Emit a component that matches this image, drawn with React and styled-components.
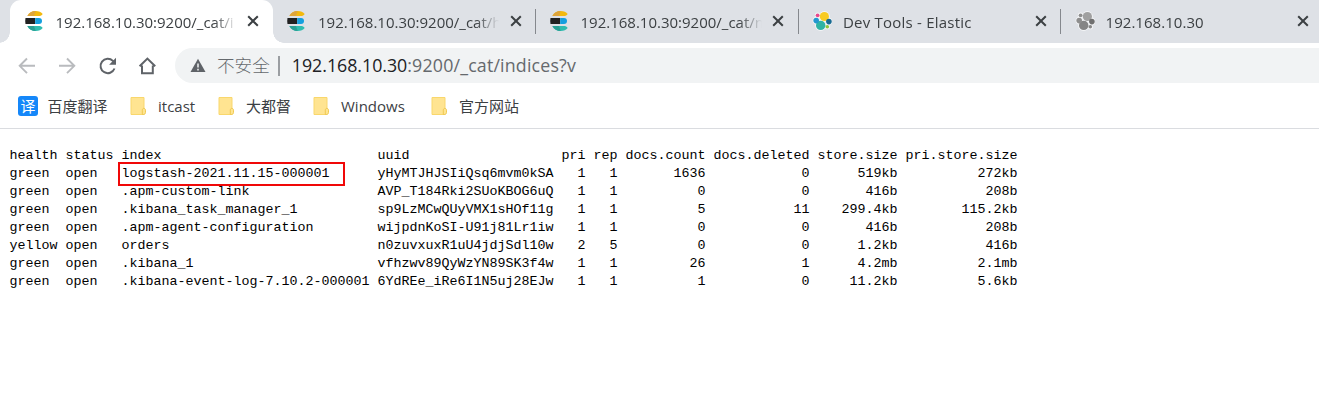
import React from 'react';
import styled, { createGlobalStyle } from 'styled-components';

const Global = createGlobalStyle`
  *, *::before, *::after { box-sizing: border-box; }
  body { margin: 0; background: #fff; overflow: hidden; }
  svg { display: block; flex: none; }
`;

const Browser = styled.div`
  width: 1319px;
  height: 402px;
  overflow: hidden;
  background: #fff;
  color: #3c4043;
  font-family: 'Open Sans', 'Noto Sans CJK SC', sans-serif;
`;

const TabStrip = styled.div`
  display: flex;
  height: 43px;
  padding-left: 10px;
  background: #dee1e6;
`;

const Tab = styled.div`
  position: relative;
  flex: none;
  display: flex;
  align-items: center;
  width: 262.5px;
  padding: 0 0 1px 14.5px;
  border-radius: 11px 11px 0 0;
  background: ${(p) => (p.$active ? '#fff' : 'transparent')};

  &::before, &::after {
    content: '';
    display: ${(p) => (p.$active ? 'block' : 'none')};
    position: absolute;
    bottom: 0;
    width: 11px;
    height: 11px;
  }
  &::before {
    right: 100%;
    background: radial-gradient(circle at 0 0, transparent 10.5px, #fff 11px);
  }
  &::after {
    left: 100%;
    background: radial-gradient(circle at 100% 0, transparent 10.5px, #fff 11px);
  }
`;

const TabDivider = styled.i`
  position: absolute;
  left: 0;
  top: 9px;
  width: 1.4px;
  height: 25px;
  background: #85888d;
`;

const TabTitle = styled.span`
  width: 189px;
  margin-left: 11px;
  padding-top: 2px;
  white-space: nowrap;
  font-size: 15px;
  line-height: 24px;
  letter-spacing: ${(p) => p.$spacing || 0}px;
  -webkit-mask-image: linear-gradient(90deg, #000 158px, transparent 181px);
  mask-image: linear-gradient(90deg, #000 158px, transparent 181px);
`;

const Toolbar = styled.div`
  display: flex;
  align-items: center;
  height: 45px;
  padding: 0 0 0 17px;
`;

const NavButtons = styled.div`
  display: flex;
  gap: 20px;
  width: 158px;
`;

const AddressBar = styled.div`
  flex: 1;
  display: flex;
  align-items: center;
  height: 35px;
  margin-right: -30px;
  padding-left: 15px;
  border-radius: 18px;
  background: #f1f3f4;
  color: #65696d;
  white-space: nowrap;
`;

const Security = styled.span`
  margin-left: 11px;
  font-family: 'Noto Sans CJK SC', sans-serif;
  font-size: 17.6px;
  font-weight: 300;
  line-height: 34px;
  padding-bottom: 2px;
`;

const AddressDivider = styled.i`
  width: 2px;
  height: 20px;
  margin: 0 12px 0 8px;
  background: #9b9ea2;
`;

const Url = styled.span`
  font-size: 17.8px;
  line-height: 34px;
  padding-bottom: 1px;
  letter-spacing: 0.18px;
`;

const Host = styled.span`
  color: #202124;
  letter-spacing: -0.02px;
`;

const Bookmarks = styled.div`
  display: flex;
  height: 41px;
  padding: 0 0 4px 18px;
  border-bottom: 1px solid #dadce0;
`;

const Bookmark = styled.div`
  flex: none;
  display: flex;
  align-items: center;
  gap: ${(p) => p.$gap || 11.5}px;
  width: ${(p) => p.$width}px;
  font-size: 15px;
  white-space: nowrap;
`;

const BookmarkLabel = styled.span`
  padding-bottom: 1px;
`;

const TranslateBadge = styled.span`
  display: flex;
  align-items: center;
  justify-content: center;
  width: 20px;
  height: 20px;
  border-radius: 3px;
  background: #1587f9;
  color: #fff;
  font: 15px/20px 'Noto Sans CJK SC', sans-serif;
`;

const Page = styled.main`
  padding: 18px 0 0 9.5px;
  color: #000;
  font-family: 'Liberation Mono', monospace;
  font-size: 13.333px;
  line-height: 18px;
`;

const Row = styled.div`
  display: grid;
  grid-template-columns: 56px 56px 256px 184px 24px 32px 88px 104px 88px 120px;
  height: 18px;
  white-space: pre;
`;

const Cell = styled.span`
  text-align: ${(p) => (p.$right ? 'right' : 'left')};
`;

const Marked = styled.span`
  position: relative;

  &::after {
    content: '';
    position: absolute;
    left: -3.5px;
    top: -4px;
    width: 227px;
    height: 24px;
    border: 2px solid #f00808;
  }
`;

const ElasticsearchIcon = () => (
  <svg width="20" height="22" viewBox="0 0 20 22">
    <path d="M2.4 6C4 2.8 7 1 10.7 1c3.2 0 5.5 1.2 7 3-1 1.4-2.2 2-3.7 2z" fill="#f3b90e" />
    <path d="M2.4 6C4 2.8 7 1 10.7 1L9 6z" fill="#dea43b" />
    <path d="M2.4 16C4 19.2 7 21 10.7 21c3.2 0 5.5-1.2 7-3-1-1.4-2.2-2-3.7-2z" fill="#2fbcaf" />
    <path d="M2.4 16C4 19.2 7 21 10.7 21L9 16z" fill="#299f94" />
    <path d="M.5 8h9.7v6H.5c-.4-2-.4-4 0-6z" fill="#212121" />
    <path d="M10.2 8H14a3 3 0 0 1 0 6h-3.8z" fill="#159fdf" />
  </svg>
);

const ElasticIcon = ({ mono }) => {
  const c = mono
    ? ['#a0a0a0', '#858585', '#8e8e8e', '#8e8e8e', '#6f6f6f', '#888']
    : ['#f8cb22', '#2fb3a5', '#e8478b', '#2397cf', '#176a92', '#8cc63f'];
  const dots = [
    [12.4, 6.5, 4.6],
    [8.7, 15.4, 4.7],
    [5.6, 5.3, 1.9],
    [4.2, 10.6, 2.8],
    [16.9, 11.6, 2.8],
    [15.3, 16.7, 1.8],
  ];
  return (
    <svg width="20" height="22" viewBox="0 0 20 22">
      {dots.map(([cx, cy, r], i) => (
        <circle key={`rim${i}`} cx={cx} cy={cy} r={r + 0.8} fill="#f4f5f7" />
      ))}
      {dots.map(([cx, cy, r], i) => (
        <circle key={i} cx={cx} cy={cy} r={r} fill={c[i]} />
      ))}
    </svg>
  );
};

const CloseIcon = () => (
  <svg width="12" height="12" viewBox="0 0 12 12">
    <path d="M1.2 1.2l9.6 9.6M10.8 1.2L1.2 10.8" stroke="#3c4043" strokeWidth="2" />
  </svg>
);

const CloseButton = styled.span`
  margin-left: 2.5px;
`;

const ArrowIcon = ({ forward }) => (
  <svg width="20" height="20" viewBox="0 0 20 20">
    <path
      d={forward ? 'M2 9.8h15M10 2.5l7.3 7.3L10 17.1' : 'M18 9.8H3M10 2.5L2.7 9.8l7.3 7.3'}
      fill="none" stroke="#b9bbbe" strokeWidth="1.9"
    />
  </svg>
);

const ReloadIcon = () => (
  <svg width="20" height="20" viewBox="0 0 20 20">
    <path d="M17.5 12.5a7.2 7.2 0 1 1-1.6-7.6l1 1" fill="none" stroke="#5f6368" strokeWidth="2" />
    <path d="M19 1.8v6.9h-6.9z" fill="#5f6368" />
  </svg>
);

const HomeIcon = () => (
  <svg width="20" height="20" viewBox="0 0 20 20">
    <path d="M2.6 10.3L10.4 2.6l7.8 7.7M5 9.4v7.9h10.8V9.4" fill="none" stroke="#5f6368" strokeWidth="2" />
  </svg>
);

const WarningIcon = () => (
  <svg width="16" height="15" viewBox="0 0 16 15">
    <path d="M8 .7L15.5 14H.5z" fill="#5f6368" />
    <path d="M8 5.5v4M8 10.7v1.7" stroke="#f1f3f4" strokeWidth="1.5" />
  </svg>
);

const FolderIcon = () => (
  <svg width="17" height="20" viewBox="0 0 17 20">
    <path d="M1 1.5h13v17H1z" fill="#ffe491" stroke="#f9d76c" />
    <path d="M12.3 18.5v-4.3c0-2.4 3.2-2.4 3.2 0v2.2c0 1.3-.9 2.1-2.1 2.1z" fill="#ffe590" stroke="#f0c850" />
  </svg>
);

const tabs = [
  { title: '192.168.10.30:9200/_cat/i', Icon: ElasticsearchIcon },
  { title: '192.168.10.30:9200/_cat/h', Icon: ElasticsearchIcon },
  { title: '192.168.10.30:9200/_cat/n', Icon: ElasticsearchIcon },
  { title: 'Dev Tools - Elastic', Icon: ElasticIcon, spacing: 0.22 },
  { title: '192.168.10.30', Icon: ElasticIcon, mono: true, spacing: 0.05 },
];

const folders = [
  ['itcast', 88],
  ['大都督', 95],
  ['Windows', 118],
  ['官方网站', 120],
];

const rows = [
  ['health', 'status', 'index', 'uuid', 'pri', 'rep', 'docs.count', 'docs.deleted', 'store.size', 'pri.store.size'],
  ['green', 'open', 'logstash-2021.11.15-000001', 'yHyMTJHJSIiQsq6mvm0kSA', '1', '1', '1636', '0', '519kb', '272kb'],
  ['green', 'open', '.apm-custom-link', 'AVP_T184Rki2SUoKBOG6uQ', '1', '1', '0', '0', '416b', '208b'],
  ['green', 'open', '.kibana_task_manager_1', 'sp9LzMCwQUyVMX1sHOf11g', '1', '1', '5', '11', '299.4kb', '115.2kb'],
  ['green', 'open', '.apm-agent-configuration', 'wijpdnKoSI-U91j81Lr1iw', '1', '1', '0', '0', '416b', '208b'],
  ['yellow', 'open', 'orders', 'n0zuvxuxR1uU4jdjSdl10w', '2', '5', '0', '0', '1.2kb', '416b'],
  ['green', 'open', '.kibana_1', 'vfhzwv89QyWzYN89SK3f4w', '1', '1', '26', '1', '4.2mb', '2.1mb'],
  ['green', 'open', '.kibana-event-log-7.10.2-000001', '6YdREe_iRe6I1N5uj28EJw', '1', '1', '1', '0', '11.2kb', '5.6kb'],
];

export default function App() {
  return (
    <Browser>
      <Global />
      <TabStrip>
        {tabs.map(({ title, Icon, mono, spacing }, i) => (
          <Tab key={title} $active={i === 0}>
            {i > 1 && <TabDivider />}
            <Icon mono={mono} />
            <TabTitle $spacing={spacing}>{title}</TabTitle>
            <CloseButton><CloseIcon /></CloseButton>
          </Tab>
        ))}
      </TabStrip>
      <Toolbar>
        <NavButtons>
          <ArrowIcon />
          <ArrowIcon forward />
          <ReloadIcon />
          <HomeIcon />
        </NavButtons>
        <AddressBar>
          <WarningIcon />
          <Security>不安全</Security>
          <AddressDivider />
          <Url><Host>192.168.10.30</Host>:9200/_cat/indices?v</Url>
        </AddressBar>
      </Toolbar>
      <Bookmarks>
        <Bookmark $width={111.5} $gap={9.5}>
          <TranslateBadge>译</TranslateBadge>
          <BookmarkLabel>百度翻译</BookmarkLabel>
        </Bookmark>
        {folders.map(([label, width]) => (
          <Bookmark key={label} $width={width}>
            <FolderIcon />
            <BookmarkLabel>{label}</BookmarkLabel>
          </Bookmark>
        ))}
      </Bookmarks>
      <Page>
        {rows.map((row, r) => (
          <Row key={row[3]}>
            {row.map((text, c) => (
              <Cell key={c} $right={c > 3}>
                {r === 1 && c === 2 ? <Marked>{text}</Marked> : text}
              </Cell>
            ))}
          </Row>
        ))}
      </Page>
    </Browser>
  );
}
